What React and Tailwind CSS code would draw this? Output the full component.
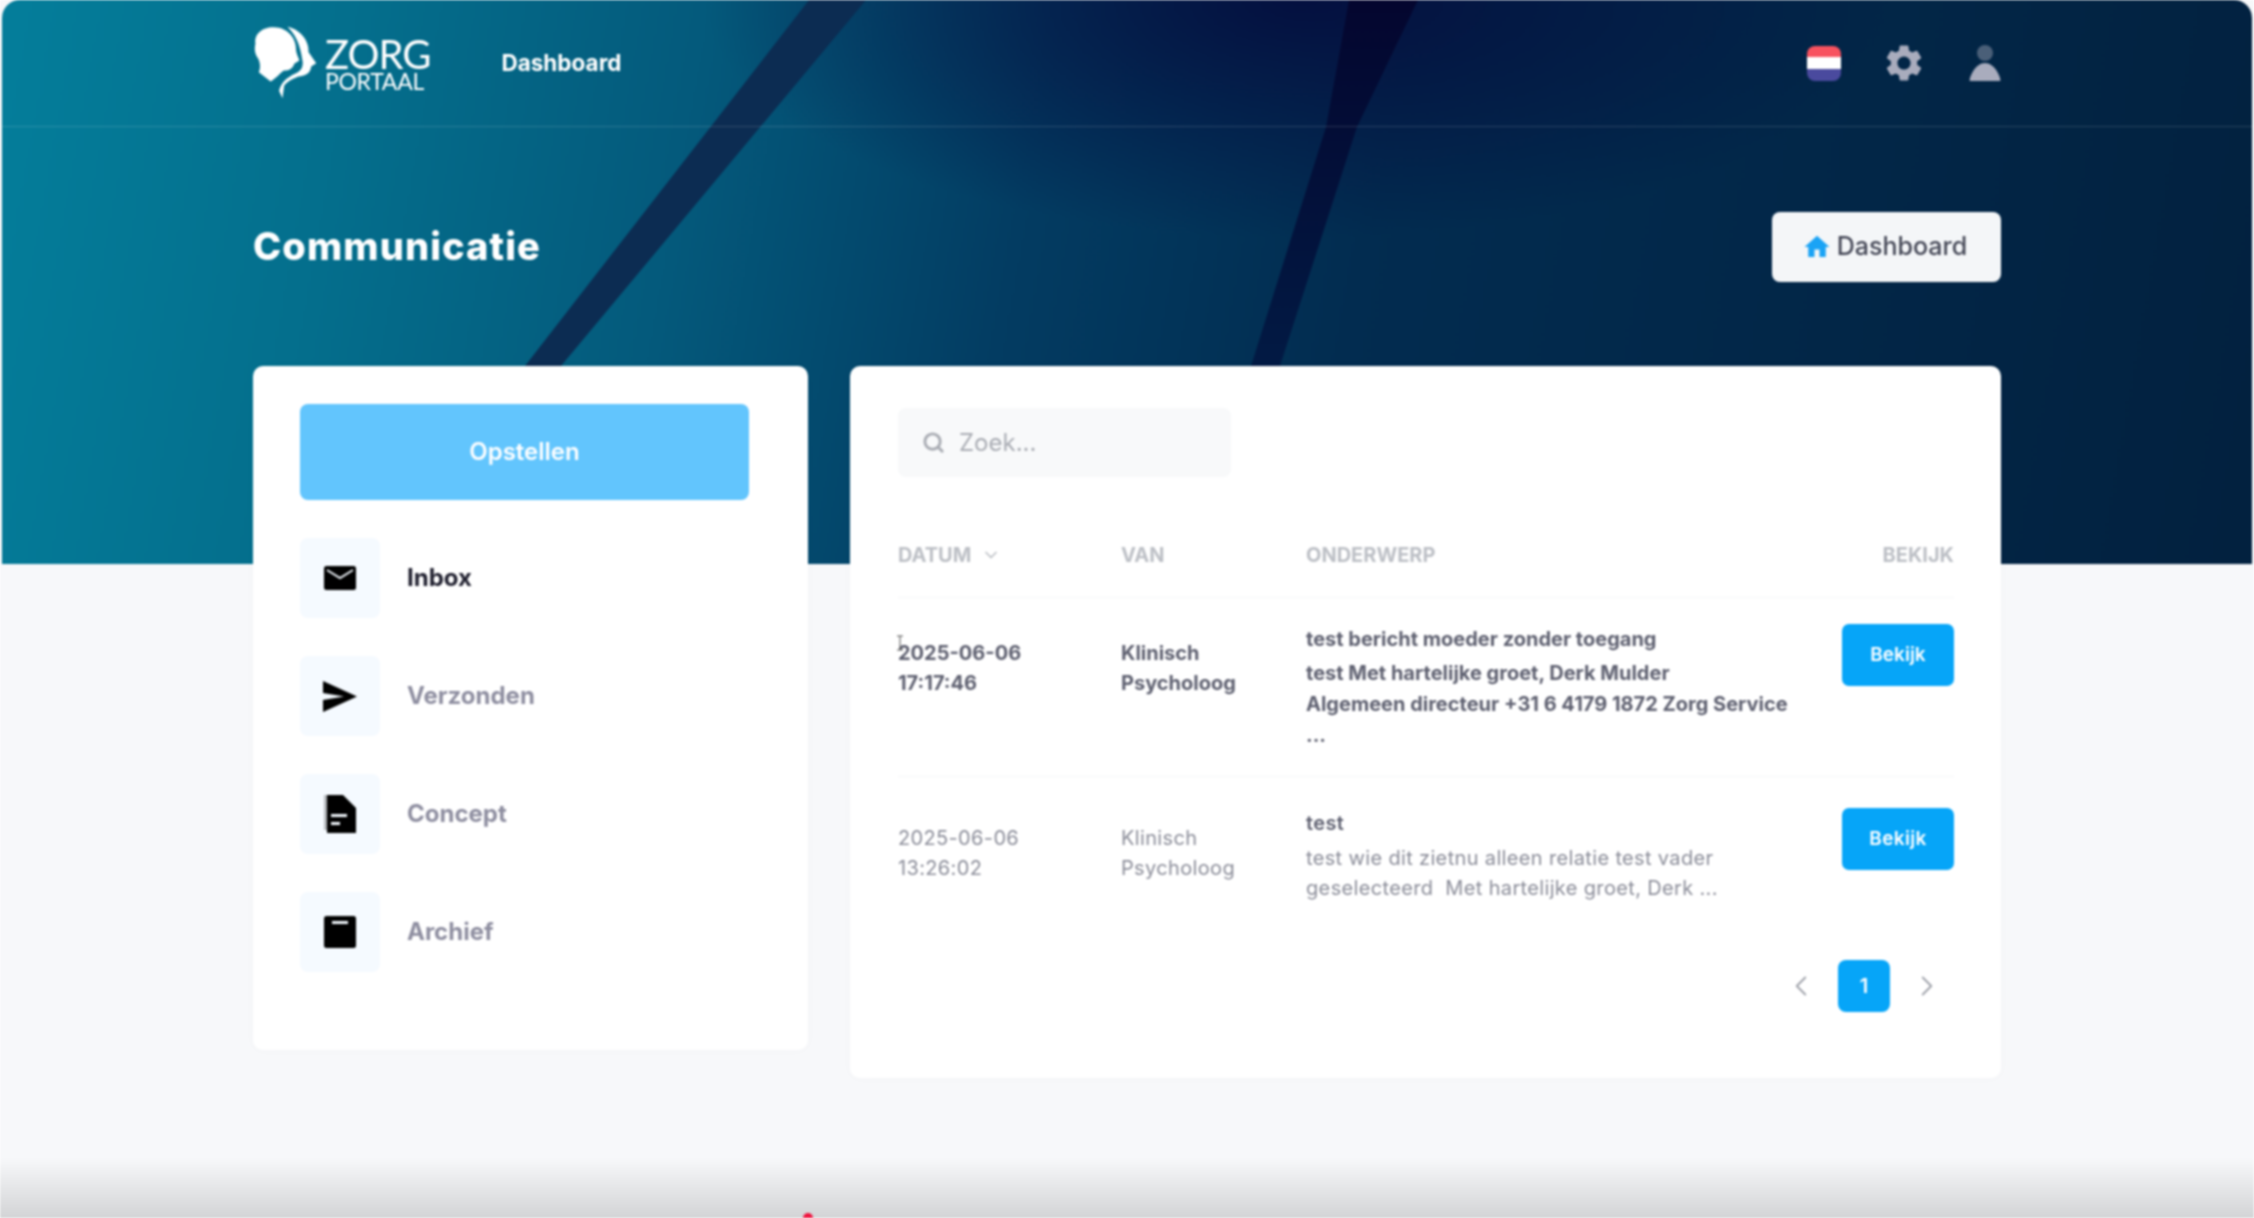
import React from 'react';
import { ChevronDown, ChevronLeft, ChevronRight, Search } from 'lucide-react';
import { MdSettings, MdHome } from 'react-icons/md';

const MailIcon = () => (
    <svg viewBox="0 0 32 24" className="w-[32px] h-[24px]">
        <rect x="0" y="0" width="32" height="24" rx="2.5" fill="#000" />
        <path d="M3 4l13 8 13-8" fill="none" stroke="#f0f6fb" strokeWidth="2" />
    </svg>
);

const SendIcon = () => (
    <svg viewBox="0 0 34 31" className="w-[34px] h-[31px]">
        <path d="M0 0l34 15.5L0 31V19l21-3.5L0 12z" fill="#000" />
    </svg>
);

const DraftIcon = () => (
    <svg viewBox="0 0 32 38" className="w-[32px] h-[38px]">
        <path d="M3 0h16l13 13v25H3z" fill="#000" />
        <path d="M0 0h3v35H0z" fill="#8a8c90" opacity="0.6" />
        <rect x="7" y="19" width="16" height="3" fill="#f0f6fb" />
        <rect x="7" y="27" width="9" height="3" fill="#f0f6fb" />
    </svg>
);

const ArchiveIcon = () => (
    <svg viewBox="0 0 32 32" className="w-[32px] h-[32px]">
        <rect x="0" y="0" width="32" height="32" rx="2.5" fill="#000" />
        <rect x="8" y="5" width="16" height="3" fill="#f0f6fb" />
    </svg>
);

const Logo = () => (
    <div className="flex items-center gap-[7px]">
        <svg viewBox="68 45 192 225" className="w-[65px] h-[76px]">
            <path
                d="M75 100C70 70 100 50 130 52c40 0 65 33 65 63 0 15 10 30 10 35l-15 10c-5 15-15 20-30 20-10 5-25 25-40 32l-35-27c7-15 3-35-5-45-8-15-8-25-5-40z"
                fill="#fff"
            />
            <path
                d="M170 50c45 10 65 50 62 75l23 33-15 10c-2 22-18 27-40 30-15 7-32 14-40 27l-5 37-10-22c5-25 25-40 45-50 25-10 25-25 25-35-5-30-10-70-45-105z"
                fill="#fff"
            />
        </svg>
        <div className="flex flex-col text-white font-['Lato',sans-serif] mt-[2px]">
            <span className="text-[40px] leading-[34px] tracking-[-1px]">ZORG</span>
            <span className="text-[23px] leading-[20px] tracking-[-0.3px]">PORTAAL</span>
        </div>
    </div>
);

const menu = [
    { label: 'Inbox', icon: <MailIcon />, active: true },
    { label: 'Verzonden', icon: <SendIcon /> },
    { label: 'Concept', icon: <DraftIcon /> },
    { label: 'Archief', icon: <ArchiveIcon /> },
];

const columns = 'grid grid-cols-[223px_185px_1fr_112px]';

const BekijkButton = () => (
    <button className="w-[112px] h-[62px] rounded-[7px] bg-[#06a5f8] text-white text-[19px] font-semibold">Bekijk</button>
);

export default function App() {
    return (
        <div className="relative w-full h-[1218px] overflow-hidden bg-[#f7f8fa] font-['Inter',sans-serif] blur-[0.9px]">
            {/* Hero background */}
            <div className="absolute top-0 left-[2px] right-[2px] h-[564px] overflow-hidden rounded-t-[18px] bg-[linear-gradient(100deg,#047e9b_0%,#046f8d_15%,#045a7c_30%,#033c62_45%,#022c50_60%,#02213f_100%)]">
                <svg viewBox="0 0 2250 564" className="absolute inset-0 w-full h-full">
                    <defs>
                        <radialGradient id="blob" cx="0.5" cy="0" r="0.5">
                            <stop offset="0%" stopColor="#050a3c" stopOpacity="0.85" />
                            <stop offset="100%" stopColor="#050a3c" stopOpacity="0" />
                        </radialGradient>
                        <linearGradient id="stripe" x1="0" y1="0" x2="0" y2="1">
                            <stop offset="0%" stopColor="#04062f" />
                            <stop offset="100%" stopColor="#021a44" />
                        </linearGradient>
                    </defs>
                    <rect x="700" y="0" width="1200" height="480" fill="url(#blob)" />
                    <polygon points="807,0 864,0 559,366 523,366" fill="#0c2c52" />
                    <polygon points="1347,0 1416,0 1355,127 1278,366 1249,366 1324,127" fill="url(#stripe)" />
                </svg>
            </div>

            {/* Top nav */}
            <header className="relative h-[127px] ml-[2px] mr-[2px] pl-[251px] pr-[251px] flex items-center justify-between border-b border-white/15">
                <div className="flex items-center">
                    <Logo />
                    <span className="ml-[71px] text-white text-[22.5px] font-bold">Dashboard</span>
                </div>
                <div className="flex items-center">
                    <div className="w-[34px] h-[35px] rounded-[8px] overflow-hidden flex flex-col">
                        <div className="flex-1 bg-[#f8525f]" />
                        <div className="flex-1 bg-white" />
                        <div className="flex-1 bg-[#4a4a9e]" />
                    </div>
                    <MdSettings className="ml-[41px] text-[#a9acbd]" size={44} />
                    <svg viewBox="0 0 32 38" className="ml-[43px] w-[32px] h-[38px]">
                        <circle cx="16" cy="9" r="8" fill="#4a5f78" />
                        <path d="M1 37c-2 0 4-18 15-18s17 18 15 18z" fill="#a9acbd" />
                    </svg>
                </div>
            </header>

            <main className="relative px-[253px]">
                {/* Title row */}
                <div className="h-[239px] flex items-center justify-between">
                    <h1 className="text-white text-[38px] font-extrabold tracking-[1.1px]">Communicatie</h1>
                    <button className="w-[229px] h-[70px] rounded-[8px] bg-[#f4f6f8] flex items-center justify-center gap-[5px] pr-[4px] text-[#444756] text-[25px] font-medium">
                        <MdHome className="text-[#1aa3f5]" size={30} />
                        Dashboard
                    </button>
                </div>

                <div className="flex items-start gap-[42px]">
                    {/* Left card */}
                    <aside className="w-[555px] h-[684px] bg-white rounded-[10px] pl-[47px] pt-[38px] shadow-[0_0_12px_rgba(0,0,0,0.02)]">
                        <button className="w-[449px] h-[96px] rounded-[8px] bg-[#62c5fd] text-white text-[24px] font-semibold">Opstellen</button>
                        <nav className="mt-[38px] flex flex-col gap-[38px]">
                            {menu.map(item => (
                                <div key={item.label} className="flex items-center gap-[27px]">
                                    <div className="w-[80px] h-[80px] rounded-[8px] bg-[#f5faff] flex items-center justify-center">
                                        {item.icon}
                                    </div>
                                    <span className={`text-[24px] font-bold ${item.active ? 'text-[#1e1e2d]' : 'text-[#8e8ea0]'}`}>{item.label}</span>
                                </div>
                            ))}
                        </nav>
                    </aside>

                    {/* Right card */}
                    <section className="w-[1151px] h-[712px] bg-white rounded-[10px] pl-[48px] pr-[47px] pt-[42px] shadow-[0_0_12px_rgba(0,0,0,0.02)]">
                        <div className="w-[333px] h-[69px] rounded-[8px] bg-[#f8f9fa] flex items-center pl-[24px] gap-[14px] text-[#a9acb3]">
                            <Search size={23} strokeWidth={3} />
                            <span className="text-[24px]">Zoek...</span>
                        </div>

                        <div className={`${columns} mt-[60px] h-[61px] border-b border-[#f5f6f8] text-[20px] leading-[36px] font-bold text-[#bcbfc5]`}>
                            <div className="flex items-center h-[36px] gap-[10px]">DATUM <ChevronDown size={20} /></div>
                            <div>VAN</div>
                            <div>ONDERWERP</div>
                            <div className="text-right">BEKIJK</div>
                        </div>

                        {/* Row 1 */}
                        <div className={`${columns} h-[179px] pt-[26px] border-b border-[#f5f6f8] text-[20px] leading-[30px] font-bold text-[#5e6070]`}>
                            <div className="relative pt-[14px]">
                                2025-06-06<br />17:17:46
                                <svg viewBox="0 0 8 16" className="absolute left-[-2px] top-[11px] w-[8px] h-[16px]">
                                    <path d="M1 1h6M4 1v14M1 15h6" stroke="#555" strokeWidth="1" fill="none" />
                                </svg>
                            </div>
                            <div className="pt-[14px]">Klinisch<br />Psycholoog</div>
                            <div>
                                <div className="mb-[4px]">test bericht moeder zonder toegang</div>
                                <div className="leading-[31px]">
                                    test Met hartelijke groet, Derk Mulder<br />
                                    Algemeen directeur +31 6 4179 1872 Zorg Service<br />
                                    ...
                                </div>
                            </div>
                            <BekijkButton />
                        </div>

                        {/* Row 2 */}
                        <div className={`${columns} h-[150px] pt-[31px] text-[20px] leading-[30px] tracking-[0.35px] text-[#8b8d99]`}>
                            <div className="pt-[15px]">2025-06-06<br />13:26:02</div>
                            <div className="pt-[15px]">Klinisch<br />Psycholoog</div>
                            <div>
                                <div className="mb-[5px] font-semibold text-[#5e6070]">test</div>
                                <div>
                                    test wie dit zietnu alleen relatie test vader<br />
                                    geselecteerd &nbsp;Met hartelijke groet, Derk ...
                                </div>
                            </div>
                            <BekijkButton />
                        </div>

                        {/* Pagination */}
                        <div className="mt-[33px] flex items-center justify-end pr-[10px] gap-[20px] text-[#9ea1a9]">
                            <ChevronLeft size={34} strokeWidth={1.3} />
                            <div className="w-[52px] h-[52px] rounded-[8px] bg-[#06a5f8] text-white text-[20px] font-semibold flex items-center justify-center">1</div>
                            <ChevronRight size={34} strokeWidth={1.3} />
                        </div>
                    </section>
                </div>
            </main>

            {/* Video fade at the bottom of the frame */}
            <div className="absolute left-0 right-0 bottom-0 h-[60px] bg-gradient-to-b from-transparent to-[#d3d4d6]" />
            <div className="absolute left-[803px] bottom-[-5px] w-[10px] h-[10px] rounded-full bg-[#f0103c]" />
        </div>
    );
}
